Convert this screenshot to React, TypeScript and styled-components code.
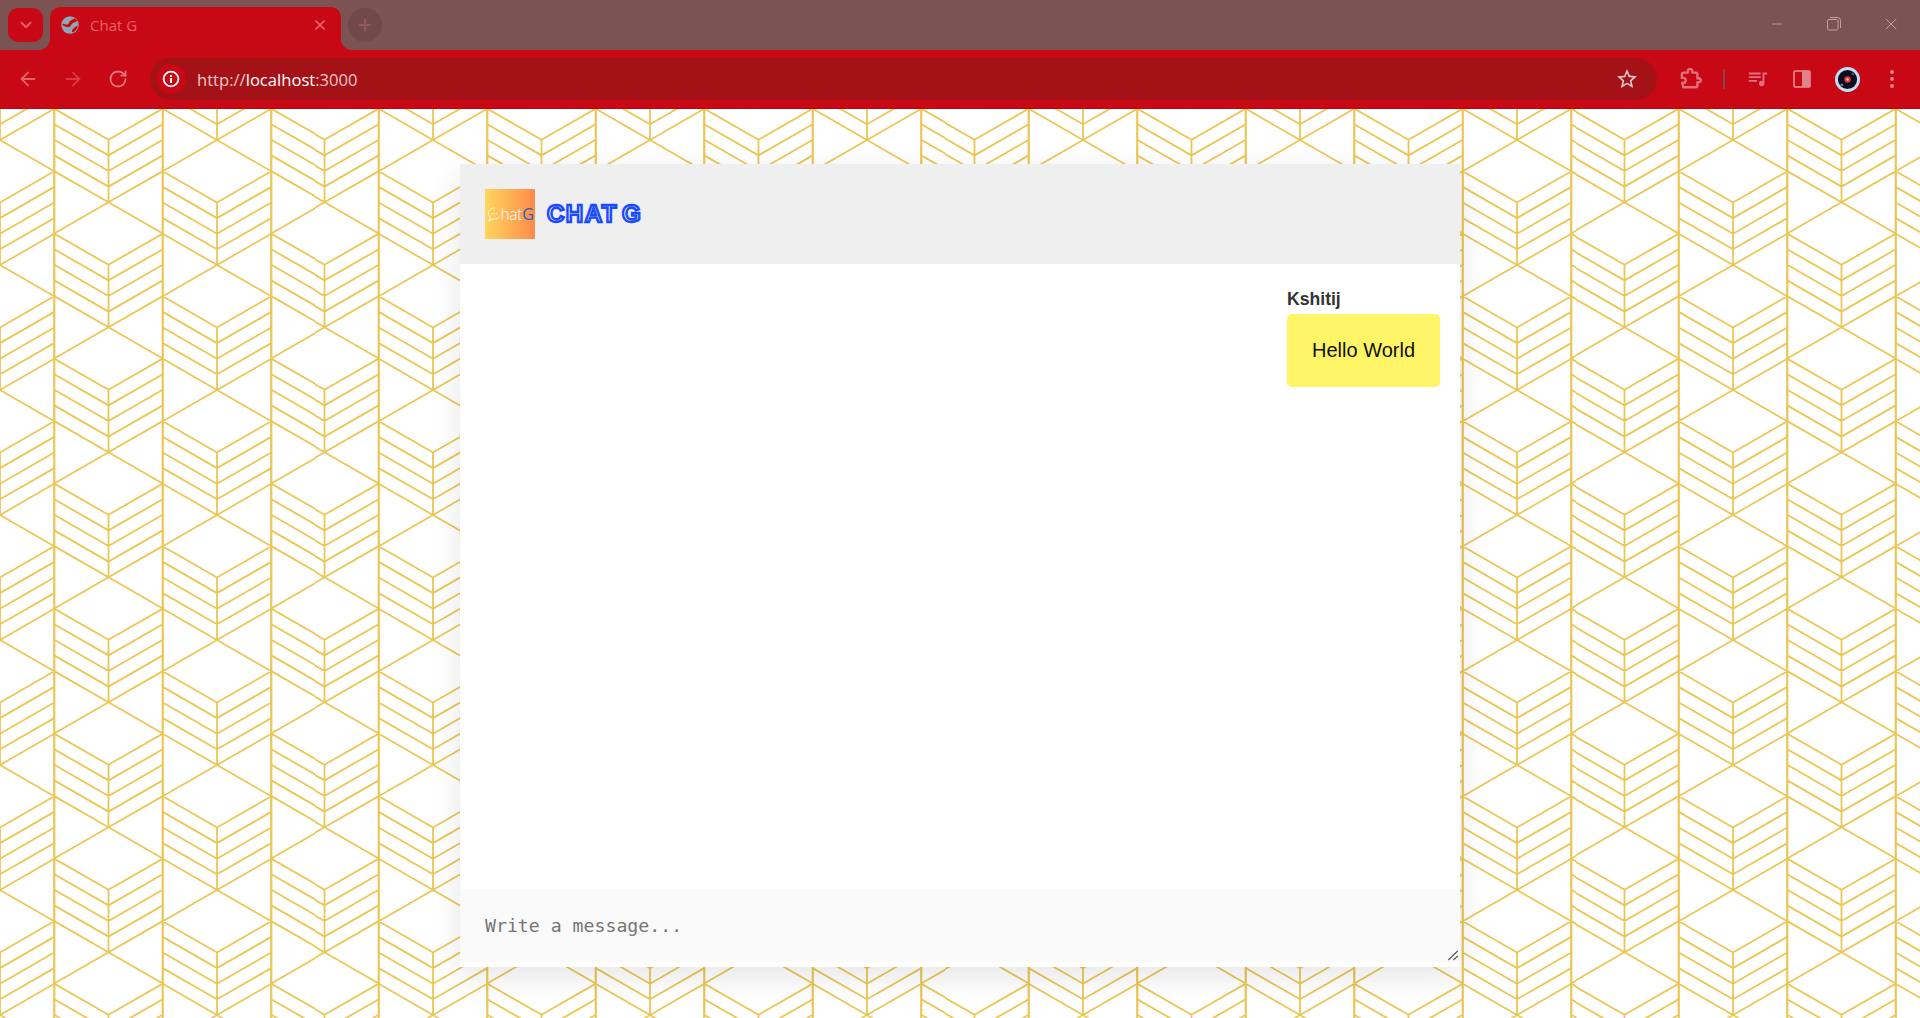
import React from 'react';
import styled, { createGlobalStyle } from 'styled-components';
import { ArrowLeft, ArrowRight, ChevronDown, Minus, Plus, RotateCw, X } from 'lucide-react';

const TILE_W = 216.67;
const TILE_H = 125;
const HALF_COL = 54.17;

// one hexagon column of the wallpaper: a diamond, then a stack of chevrons
function columnPath(cx: number, top: number) {
  const left = cx - HALF_COL;
  const right = cx + HALF_COL;
  const rise = 31.2;
  let d = `M${left} ${top + rise}L${cx} ${top}L${right} ${top + rise}`;
  [62.5, 78.1, 93.7, 109.3, 125].forEach((offset) => {
    d += `M${left} ${top + offset - rise}L${cx} ${top + offset}L${right} ${top + offset - rise}`;
  });
  d += `M${cx} ${top + 62.5}V${top + TILE_H}`;
  return d;
}

function buildPattern() {
  let d = '';
  [-TILE_H, 0, TILE_H].forEach((shift) => {
    d += columnPath(108.33, 93.3 + shift);
    d += columnPath(0, 31 + shift);
    d += columnPath(TILE_W, 31 + shift);
  });
  return `<svg xmlns="http://www.w3.org/2000/svg" width="${TILE_W}" height="${TILE_H}" viewBox="0 0 ${TILE_W} ${TILE_H}"><g fill="none" stroke="#ecc655"><path stroke-width="1.8" d="${d}"/><path stroke-width="2.2" d="M54.17 0V${TILE_H}M162.5 0V${TILE_H}"/></g></svg>`;
}

const resizerSvg = `<svg xmlns="http://www.w3.org/2000/svg" width="15" height="15"><path d="M3.3 13L12.700 4M8.300 13L12.700 9" stroke="#555" stroke-width="1.200" fill="none"/></svg>`;

const GlobalStyle = createGlobalStyle`
  html, body {
    margin: 0;
    height: 100%;
    overflow: hidden;
    background: #fff;
    font-family: "Liberation Sans", Arial, sans-serif;
  }
`;

const Window = styled.div`
  display: flex;
  flex-direction: column;
  height: 1018px;
`;

const TabStrip = styled.div`
  display: flex;
  align-items: flex-start;
  flex: 0 0 50px;
  padding-left: 8px;
  background: #7b5353;
`;

const TabSearch = styled.div`
  display: flex;
  align-items: center;
  justify-content: center;
  width: 35px;
  height: 34px;
  margin-top: 8px;
  border-radius: 10px;
  background: #c80815;
  color: #ea5963;
`;

const Tab = styled.div`
  position: relative;
  display: flex;
  align-items: center;
  width: 291px;
  height: 43px;
  margin: 7px 0 0 7px;
  padding: 0 13px 7px 11px;
  box-sizing: border-box;
  border-radius: 10px 10px 0 0;
  background: #c80815;

  &::before,
  &::after {
    content: '';
    position: absolute;
    bottom: 0;
    width: 12px;
    height: 12px;
  }
  &::before {
    left: -12px;
    background: radial-gradient(circle at 0 0, transparent 12px, #c80815 12.5px);
  }
  &::after {
    right: -12px;
    background: radial-gradient(circle at 100% 0, transparent 12px, #c80815 12.5px);
  }
`;

const TabTitle = styled.span`
  flex: 1;
  margin-left: 11px;
  font-family: "Open Sans", sans-serif;
  font-size: 15px;
  color: #e8616b;
`;

const TabClose = styled(X)`
  color: #ee6a73;
`;

const NewTab = styled.div`
  display: flex;
  align-items: center;
  justify-content: center;
  width: 34px;
  height: 34px;
  margin: 8px 0 0 7px;
  border-radius: 50%;
  background: #714949;
  color: #945a5c;
`;

const WindowControls = styled.div`
  display: flex;
  margin-left: auto;
`;

const WindowButton = styled.div`
  display: flex;
  align-items: center;
  justify-content: center;
  width: 57.3px;
  height: 48px;
  color: #bca2a2;
`;

const Toolbar = styled.div`
  display: flex;
  align-items: center;
  flex: 0 0 58px;
  padding-left: 10px;
  background: #c80815;
  border-bottom: 1px solid #b30b15;
`;

const ToolButton = styled.div<{ $color?: string; $spacing?: number }>`
  display: flex;
  align-items: center;
  justify-content: center;
  width: 36px;
  height: 36px;
  margin-right: ${(p) => p.$spacing ?? 9}px;
  color: ${(p) => p.$color ?? '#e2636c'};
`;

const AddressBar = styled.div`
  display: flex;
  align-items: center;
  width: 1507px;
  height: 42px;
  margin: 0 16px 0 5px;
  padding: 0 18px 0 6px;
  box-sizing: border-box;
  border-radius: 21px;
  background: #a41218;
`;

const SiteInfo = styled.div`
  display: flex;
  align-items: center;
  justify-content: center;
  width: 30px;
  height: 30px;
  border-radius: 50%;
  background: #c80815;
`;

const Url = styled.div`
  flex: 1;
  margin-left: 11px;
  font-family: "Open Sans", sans-serif;
  font-size: 16.6px;
  color: #eec4c7;

  b {
    font-weight: 400;
    color: #fff;
  }
`;

const ToolbarDivider = styled.div`
  width: 2px;
  height: 20px;
  margin: 0 15px 0 14px;
  background: #86474c;
`;

const Wallpaper = styled.main`
  flex: 1;
  min-height: 0;
  padding-top: 55px;
  background-color: #fff;
  background-image: url("data:image/svg+xml,${encodeURIComponent(buildPattern())}");
  background-size: ${TILE_W}px ${TILE_H}px;
`;

const ChatPanel = styled.section`
  display: flex;
  flex-direction: column;
  width: 1000px;
  height: 803px;
  margin: 0 auto;
  background: #fff;
  box-shadow: 0 10px 30px rgba(0, 0, 0, 0.1);
`;

const ChatHeader = styled.header`
  display: flex;
  align-items: center;
  flex: 0 0 100px;
  padding-left: 25px;
  background: #efefef;
`;

const Logo = styled.div`
  display: flex;
  align-items: center;
  justify-content: center;
  width: 50px;
  height: 50px;
  background: linear-gradient(90deg, #ffd65e, #ff8a4c);
  font-family: "Open Sans", sans-serif;
  font-size: 15.5px;
  font-weight: 300;
  letter-spacing: -0.3px;
  color: #fff;
`;

const LogoG = styled.span`
  font-size: 16px;
  font-weight: 400;
  color: #2d62ad;
`;

const BrandName = styled.h1`
  margin: 0 0 0 12px;
  font-family: "Liberation Sans", Arial, sans-serif;
  font-size: 24px;
  font-weight: 700;
  letter-spacing: 1.5px;
  word-spacing: -4px;
  color: #f4f6ff;
  -webkit-text-stroke: 2.4px #1a4cff;
`;

const ChatBody = styled.div`
  display: flex;
  flex-direction: column;
  flex: 1;
  padding: 25px 20px 0 0;
`;

const Message = styled.div`
  align-self: flex-end;
`;

const Sender = styled.div`
  margin-bottom: 4px;
  font-size: 17.6px;
  font-weight: 700;
  color: #333;
`;

const Bubble = styled.div`
  padding: 25px;
  border-radius: 5px;
  background: #fff566;
  font-size: 20px;
  color: #111;
`;

const Composer = styled.div`
  display: flex;
  padding-bottom: 5px;
`;

const MessageInput = styled.textarea`
  flex: 1;
  height: 73px;
  padding: 26px 25px 24px;
  box-sizing: border-box;
  border: 0;
  outline: 0;
  background: #fafafa;
  font-family: "DejaVu Sans Mono", monospace;
  font-size: 18.2px;
  line-height: 22px;

  &::-webkit-resizer {
    background: url("data:image/svg+xml,${encodeURIComponent(resizerSvg)}") no-repeat;
  }
`;

function GlobeIcon() {
  return (
    <svg width="18" height="18" viewBox="0 0 18 18">
      <circle cx="9" cy="9" r="8.7" fill="#8fa7b5" />
      <path d="M1.500 8c2-.8 3.500 1.200 5 .6s1.500-2.600 3-4c1.300-1.100 3-1 4-2.400 1.200.8 2.200 1.800 2.800 3-1.800 1-3.800 1-5 2.300s-1.300 3-3.300 3.600-4.500-.5-6.500-2.100z" fill="#c80815" />
      <path d="M16.800 9.500c-.2 3.300-2.400 6-5.300 7-1-1-.6-2.300.5-3.500s2.800-2.800 4.800-3.500z" fill="#c80815" />
    </svg>
  );
}

function InfoIcon() {
  return (
    <svg width="18" height="18" viewBox="0 0 18 18">
      <circle cx="9" cy="9" r="7.400" fill="none" stroke="#fff" strokeWidth="1.800" />
      <rect x="8" y="8" width="2" height="5" fill="#fff" />
      <rect x="8" y="5" width="2" height="2" fill="#fff" />
    </svg>
  );
}

function StarIcon() {
  return (
    <svg width="24" height="24" viewBox="0 0 24 24" fill="#ddc9cb">
      <path d="M22 9.240l-7.190-.62L12 2 9.190 8.630 2 9.240l5.460 4.730L5.820 21 12 17.270 18.180 21l-1.630-7.030L22 9.240zM12 15.400l-3.760 2.270 1-4.280-3.320-2.880 4.380-.38L12 6.100l1.710 4.040 4.380.38-3.320 2.880 1 4.280L12 15.400z" />
    </svg>
  );
}

function ExtensionIcon() {
  return (
    <svg width="22" height="22" viewBox="0 0 24 24" fill="none" stroke="#e0707a" strokeWidth="2.600" strokeLinejoin="round">
      <path d="M20.500 11.500H19V7c0-1.100-.9-2-2-2h-3.500V3.500a2.500 2.500 0 0 0-5 0V5H4c-1.100 0-2 .9-2 2v3.800h1.500a2.700 2.700 0 0 1 0 5.400H2.500l1 4.800h13.500c1.100 0 2-.9 2-2v-3.500h1.500a2.200 2.200 0 0 0 0-4.500z" />
    </svg>
  );
}

function MediaIcon() {
  return (
    <svg width="22" height="22" viewBox="0 0 24 24" fill="#e2707a">
      <path d="M15 5H2v2h13V5zm0 4H2v2h13V9zM2 15h9v-2H2v2zM17 5v9.180c-.31-.11-.65-.18-1-.18-1.660 0-3 1.340-3 3s1.340 3 3 3 3-1.340 3-3V7h3V5h-5z" />
    </svg>
  );
}

function SidePanelIcon() {
  return (
    <svg width="18" height="18" viewBox="0 0 18 18">
      <rect x="1" y="1" width="16" height="16" rx="1.500" fill="none" stroke="#e2707a" strokeWidth="2" />
      <rect x="9" y="1" width="8" height="16" fill="#e2838a" />
    </svg>
  );
}

function AvatarIcon() {
  return (
    <svg width="25" height="25" viewBox="0 0 25 25">
      <circle cx="12.500" cy="12.500" r="12.500" fill="#bfe0f2" />
      <circle cx="12.500" cy="12.500" r="9.600" fill="#0d0c1d" />
      <circle cx="12.500" cy="12.500" r="3.200" fill="#e8304f" />
      <circle cx="12.500" cy="12.500" r="1.200" fill="#ffd75e" />
      <circle cx="6.800" cy="18" r="1.600" fill="#6d7280" />
      <circle cx="18" cy="6.800" r="1.600" fill="#4a4e5c" />
    </svg>
  );
}

function MenuIcon() {
  return (
    <svg width="6" height="20" viewBox="0 0 6 20" fill="#e2838a">
      <circle cx="3" cy="3" r="2" />
      <circle cx="3" cy="10" r="2" />
      <circle cx="3" cy="17" r="2" />
    </svg>
  );
}

function RestoreIcon() {
  return (
    <svg width="14" height="14" viewBox="0 0 14 14" fill="none" stroke="currentColor">
      <rect x="0.500" y="2.500" width="10.500" height="10.500" rx="1.500" />
      <path d="M3 .5h7.500a3 3 0 0 1 3 3V11" />
    </svg>
  );
}

function ChatBubbleIcon() {
  return (
    <svg width="14" height="17" viewBox="0 0 15 17" fill="none" stroke="#fff" strokeWidth="1">
      <path d="M8 1.500c-3.500 0-6.500 2.400-6.500 5.800 0 1.800.8 3.300 2 4.200L2 15.500l4.500-2.300c.5.1 1 .1 1.500.1 2 0 3.600-.7 5-2" />
      <path d="M5 7.500h1M7.500 7.500h1M10 7.500h1" strokeWidth="1.300" />
    </svg>
  );
}

export default function App() {
  return (
    <>
      <GlobalStyle />
      <Window>
        <TabStrip>
          <TabSearch>
            <ChevronDown size={18} strokeWidth={3} />
          </TabSearch>
          <Tab>
            <GlobeIcon />
            <TabTitle>Chat G</TabTitle>
            <TabClose size={16} strokeWidth={2.5} />
          </Tab>
          <NewTab>
            <Plus size={18} strokeWidth={2.5} />
          </NewTab>
          <WindowControls>
            <WindowButton>
              <Minus size={16} strokeWidth={1.3} />
            </WindowButton>
            <WindowButton>
              <RestoreIcon />
            </WindowButton>
            <WindowButton>
              <X size={20} strokeWidth={1.2} />
            </WindowButton>
          </WindowControls>
        </TabStrip>
        <Toolbar>
          <ToolButton>
            <ArrowLeft size={22} strokeWidth={2} />
          </ToolButton>
          <ToolButton $color="#d93a45">
            <ArrowRight size={22} strokeWidth={2} />
          </ToolButton>
          <ToolButton $color="#e0757d">
            <RotateCw size={20} strokeWidth={2.2} />
          </ToolButton>
          <AddressBar>
            <SiteInfo>
              <InfoIcon />
            </SiteInfo>
            <Url>
              http://<b>localhost</b>:3000
            </Url>
            <StarIcon />
          </AddressBar>
          <ToolButton $spacing={0}>
            <ExtensionIcon />
          </ToolButton>
          <ToolbarDivider />
          <ToolButton $spacing={8}>
            <MediaIcon />
          </ToolButton>
          <ToolButton>
            <SidePanelIcon />
          </ToolButton>
          <ToolButton>
            <AvatarIcon />
          </ToolButton>
          <ToolButton>
            <MenuIcon />
          </ToolButton>
        </Toolbar>
        <Wallpaper>
          <ChatPanel>
            <ChatHeader>
              <Logo>
                <ChatBubbleIcon />
                hat
                <LogoG>G</LogoG>
              </Logo>
              <BrandName>CHAT G</BrandName>
            </ChatHeader>
            <ChatBody>
              <Message>
                <Sender>Kshitij</Sender>
                <Bubble>Hello World</Bubble>
              </Message>
            </ChatBody>
            <Composer>
              <MessageInput placeholder="Write a message..." />
            </Composer>
          </ChatPanel>
        </Wallpaper>
      </Window>
    </>
  );
}
